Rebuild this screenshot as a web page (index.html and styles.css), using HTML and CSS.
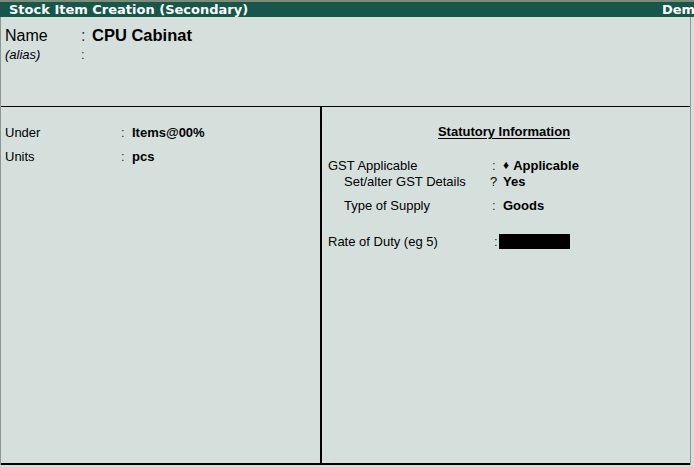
FILE: index.html
```html
<!DOCTYPE html>
<html>
<head>
<meta charset="utf-8">
<link rel="stylesheet" href="styles.css">
</head>
<body>
<div class="topline"></div>
<div class="titlebar">
  <span class="title">Stock Item Creation (Secondary)</span>
  <span class="company">Dem</span>
</div>
<div class="frame">
  <div class="header">
    <div class="name-row">
      <span class="name-label">Name</span>
      <span class="name-colon">:</span>
      <span class="name-value">CPU Cabinat</span>
    </div>
    <div class="alias-row">
      <span class="alias-label">(alias)</span>
      <span class="alias-colon">:</span>
    </div>
  </div>
  <div class="body">
    <div class="left">
      <div class="lrow"><span class="llabel">Under</span><span class="lcolon">:</span><span class="val">Items@00%</span></div>
      <div class="lrow"><span class="llabel">Units</span><span class="lcolon">:</span><span class="val">pcs</span></div>
    </div>
    <div class="right">
      <div class="stat-title"><span>Statutory Information</span></div>
      <div class="rrow r-gst"><span class="rlabel">GST Applicable</span><span class="rcolon">:</span><span class="val"><span class="diamond">♦</span>Applicable</span></div>
      <div class="rrow r-set sub"><span class="rlabel">Set/alter GST Details</span><span class="rcolon q">?</span><span class="val">Yes</span></div>
      <div class="rrow r-type sub"><span class="rlabel">Type of Supply</span><span class="rcolon">:</span><span class="val">Goods</span></div>
      <div class="rrow r-rate"><span class="rlabel">Rate of Duty (eg 5)</span><span class="rcolon">:</span><span class="field"></span></div>
    </div>
  </div>
</div>
</body>
</html>
```
FILE: styles.css
```css
html, body {
  margin: 0;
  padding: 0;
  background: #d5e0dd;
  width: 694px;
  height: 467px;
  overflow: hidden;
  font-family: "Liberation Sans", Arial, sans-serif;
  color: #000;
}
.topline {
  height: 2px;
  background: #7d8b78;
}
.titlebar {
  height: 15px;
  background: #17574a;
  color: #fff;
  display: flex;
  justify-content: space-between;
  align-items: center;
  overflow: hidden;
  white-space: nowrap;
}
.title {
  font-family: "DejaVu Sans", Verdana, sans-serif;
  font-weight: bold;
  font-size: 13px;
  padding-left: 9px;
  line-height: 15px;
}
.company {
  font-family: "DejaVu Sans", Verdana, sans-serif;
  font-weight: bold;
  font-size: 13px;
  line-height: 15px;
  width: 32px;
  overflow: hidden;
}
.frame {
  width: 689px;
  height: 448px;
  border-left: 1px solid #8d9894;
  border-right: 1px solid #8d9894;
  display: flex;
  flex-direction: column;
}
.header {
  height: 90px;
  border-bottom: 1px solid #000;
  padding-left: 4px;
  box-sizing: border-box;
  padding-top: 9px;
}
.name-row {
  display: flex;
  font-size: 16px;
  line-height: 19px;
}
.name-label { width: 76px; }
.name-colon { width: 11px; color: #333; }
.name-value { font-weight: bold; font-size: 16.5px; }
.alias-row {
  display: flex;
  font-size: 13px;
  line-height: 16px;
  margin-top: 2px;
}
.alias-label { width: 76px; font-style: italic; }
.alias-colon { color: #333; }
.body {
  flex: 1;
  display: flex;
  border-bottom: 2px solid #000;
}
.left {
  border-right: 2px solid #000;
  padding-top: 18px;
  padding-left: 4px;
  box-sizing: border-box;
  width: 321px;
}
.lrow {
  display: flex;
  font-size: 13px;
  line-height: 15px;
  height: 24px;
}
.llabel { width: 116px; }
.lcolon { width: 11px; color: #333; }
.val { font-weight: bold; }
.right {
  flex: 1;
  padding-top: 18px;
  padding-left: 6px;
  font-size: 13px;
}
.stat-title {
  text-align: center;
  font-weight: bold;
  line-height: 15px;
  height: 32px;
  padding-right: 10px;
  margin-top: -1px;
  margin-bottom: 1px;
}
.stat-title span {
  text-decoration: underline;
  text-underline-offset: 2px;
}
.rrow {
  display: flex;
  line-height: 15px;
  align-items: center;
}
.rlabel { width: 164px; }
.sub .rlabel { width: 148px; padding-left: 16px; }
.rcolon { width: 11px; color: #333; }
.rcolon.q { width: 13px; margin-left: -2px; color: #000; }
.diamond { font-size: 12px; vertical-align: 1px; margin-right: 4px; }
.r-gst { height: 16px; }
.r-set { height: 24px; align-items: flex-start; padding-top: 1px; }
.r-type { height: 36px; align-items: flex-start; }
.r-rate .rcolon { width: 5px; margin-left: 2px; }
.field {
  display: inline-block;
  width: 71px;
  height: 15px;
  background: #000;
}
```
